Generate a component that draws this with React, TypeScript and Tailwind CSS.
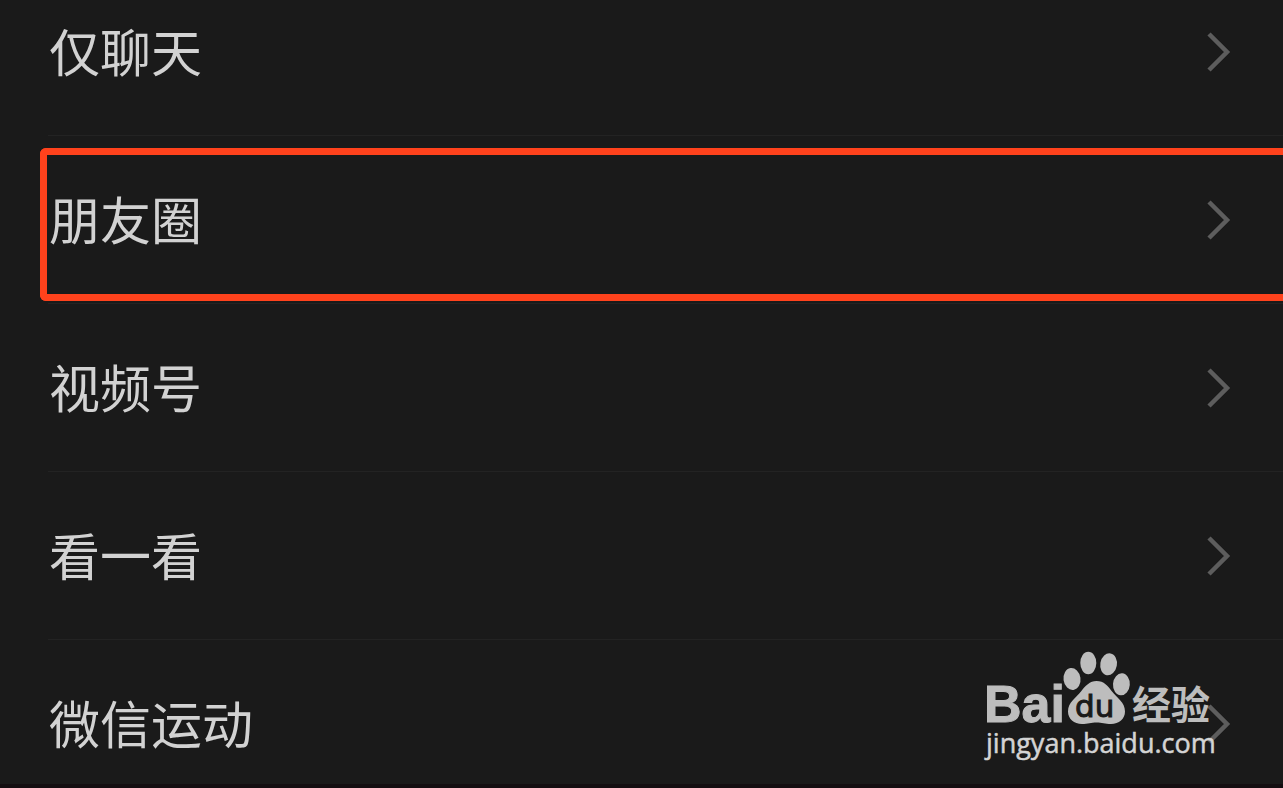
import React from 'react';

interface SettingsRowProps {
  label: string;
  highlighted?: boolean;
}

const rows = [
  { id: 'chat-only', label: '仅聊天' },
  { id: 'moments', label: '朋友圈', highlighted: true },
  { id: 'channels', label: '视频号' },
  { id: 'top-stories', label: '看一看' },
  { id: 'werun', label: '微信运动' },
];

function Chevron() {
  return (
    <svg width="24" height="40" viewBox="0 0 24 40" fill="none" stroke="#5d5d5d" strokeWidth="4.5" aria-hidden="true">
      <path d="M2 2 L20 20 L2 38" />
    </svg>
  );
}

function SettingsRow({ label, highlighted }: SettingsRowProps) {
  return (
    <li className="relative pl-12">
      <button className="flex h-42 w-full items-center justify-between border-b border-[#232323] pr-13 pl-px text-left">
        <span className="pb-0.5 text-[51px] leading-none font-normal text-[#d2d2d2]">{label}</span>
        <Chevron />
      </button>
      {highlighted && (
        <div className="pointer-events-none absolute top-3 right-0 bottom-[3px] left-10 rounded-l-md border-7 border-r-0 border-[#ff421c]" />
      )}
    </li>
  );
}

function Watermark() {
  return (
    <div className="pointer-events-none absolute right-[66px] bottom-4">
      <svg width="234" height="120" viewBox="983 648 234 120" fill="#bdbdbd" role="img" aria-label="Baidu 经验">
        <text x="984" y="722" fontSize="52" fontFamily="'Liberation Sans', Arial, sans-serif" fontWeight="700" stroke="#bdbdbd" strokeWidth="1">Bai</text>
        <ellipse cx="1072" cy="679" rx="8.5" ry="11" transform="rotate(-8 1072 679)" />
        <ellipse cx="1088.3" cy="663" rx="8" ry="11.3" />
        <ellipse cx="1108.6" cy="664.3" rx="8.3" ry="11" transform="rotate(10 1108.6 664.3)" />
        <ellipse cx="1121.4" cy="684.3" rx="8.4" ry="11" transform="rotate(4 1121.4 684.3)" />
        <path d="M1096.5 681 C1104 681 1108 686 1112 691.5 C1117 698 1125 702 1125 711.5 C1125 719 1119 724 1111 724 C1105 724 1102 722.5 1096.5 722.5 C1091 722.5 1088 724 1082 724 C1074 724 1068 719 1068 711.5 C1068 702 1076 698 1081 691.5 C1085 686 1090 681 1096.5 681 Z" />
        <text x="1075" y="717" fontSize="31" fontFamily="'DejaVu Sans', sans-serif" fill="#1a1a1a" stroke="#1a1a1a" strokeWidth="1">du</text>
        <text x="1132" y="719" fontSize="39" fontFamily="'Noto Sans CJK SC', sans-serif" fontWeight="700">经验</text>
        <text x="986" y="753" fontSize="27" fontFamily="'Open Sans', 'Noto Sans', sans-serif" fill="#d4d4d4" stroke="#d4d4d4" strokeWidth="0.5">jingyan.baidu.com</text>
      </svg>
    </div>
  );
}

export default function App() {
  return (
    <main className="relative h-screen overflow-hidden border-b-4 border-[#140e11] bg-[#1a1a1a] font-['Noto_Sans_CJK_SC',sans-serif]">
      <ul className="-mt-8">
        {rows.map((row) => (
          <SettingsRow key={row.id} label={row.label} highlighted={row.highlighted} />
        ))}
      </ul>
      <Watermark />
    </main>
  );
}
